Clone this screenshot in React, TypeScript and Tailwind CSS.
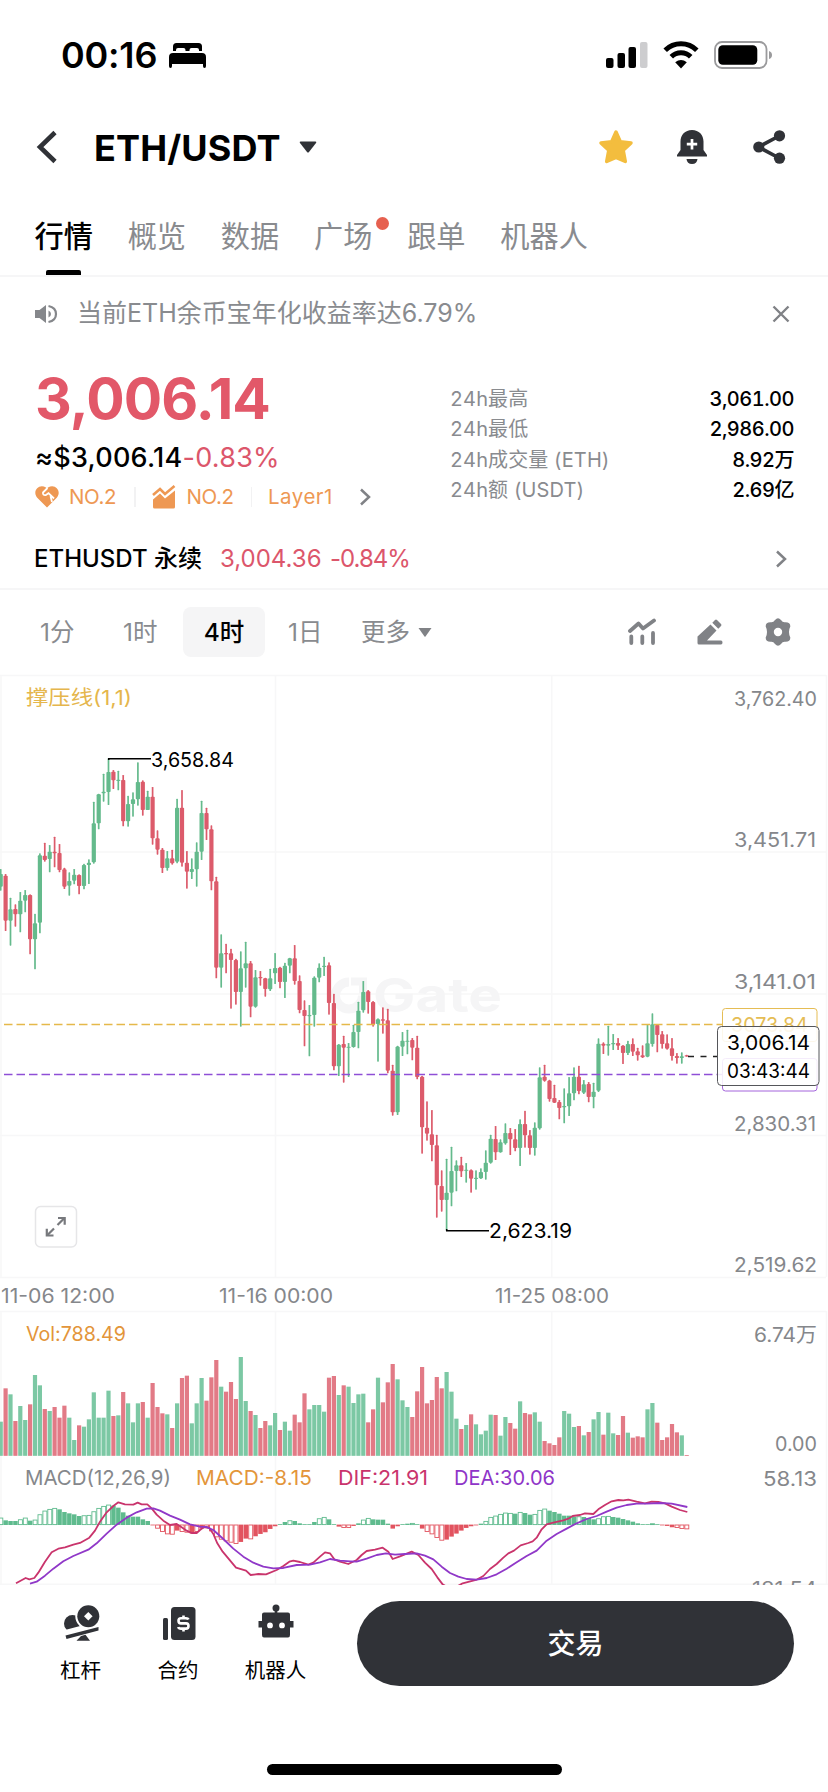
import React from "react";

type Candle = [number, number, number, number];

// Vertical positions: high, body top, body bottom, low. Each block has its own origin.
const SERIES: { base: number; rows: Candle[] }[] = [
  {
    base: 670,
    rows: [
      [597, 612, 650, 662], [612, 617, 752, 783], [683, 718, 752, 827], [703, 717, 733, 770], [666, 692, 733, 787],
      [660, 675, 692, 727], [673, 675, 808, 853], [731, 760, 808, 898], [550, 556, 758, 790], [518, 557, 570, 575],
      [525, 545, 567, 607], [500, 545, 550, 592], [522, 549, 600, 607], [593, 598, 650, 657], [607, 633, 647, 677],
      [597, 614, 632, 643], [613, 615, 648, 673], [581, 585, 648, 658], [568, 578, 585, 642], [395, 460, 577, 581],
      [371, 373, 460, 478], [311, 365, 370, 395], [265, 306, 366, 405], [300, 305, 331, 357], [302, 329, 333, 361],
      [315, 330, 454, 469], [377, 402, 454, 470], [367, 388, 402, 440], [277, 336, 388, 407], [331, 335, 420, 437],
      [362, 380, 420, 420], [351, 380, 505, 524], [481, 505, 539, 554], [534, 539, 594, 609], [543, 565, 594, 602],
      [539, 565, 580, 584], [386, 413, 575, 580], [360, 413, 578, 590], [543, 578, 605, 656], [565, 597, 606, 627],
      [517, 545, 598, 650], [392, 429, 545, 570], [413, 429, 478, 510], [466, 478, 634, 661], [620, 634, 893, 925],
      [793, 850, 893, 953], [821, 849, 853, 910], [836, 850, 870, 1016], [866, 870, 966, 1004],
    ],
  },
  {
    base: 820,
    rows: [
      [394, 445, 516, 620], [365, 430, 445, 503], [423, 430, 560, 592], [450, 472, 560, 563], [453, 471, 474, 497],
      [473, 475, 507, 530], [446, 475, 508, 513], [399, 444, 460, 492], [440, 443, 486, 505], [428, 437, 486, 534],
      [413, 415, 437, 460], [375, 415, 483, 494], [466, 483, 570, 580], [541, 570, 588, 679], [555, 585, 588, 709],
      [469, 473, 585, 620], [430, 443, 473, 487], [410, 437, 441, 468], [427, 436, 549, 584], [521, 549, 739, 751],
      [672, 674, 739, 768], [647, 672, 683, 788], [669, 680, 683, 771], [614, 636, 681, 683], [545, 572, 636, 685],
      [483, 516, 571, 578], [510, 514, 546, 581], [543, 546, 614, 620], [595, 598, 612, 725], [562, 598, 602, 641],
      [566, 601, 752, 760], [734, 752, 877, 887], [677, 680, 877, 885], [636, 662, 680, 708], [629, 662, 665, 703],
      [654, 660, 683, 721], [647, 683, 771, 778], [767, 770, 922, 1001],
    ],
  },
  {
    base: 980,
    rows: [
      [364, 443, 461, 482], [390, 463, 495, 544], [464, 496, 616, 713], [571, 618, 660, 695], [536, 638, 660, 752],
      [500, 573, 638, 679], [541, 556, 573, 634], [530, 556, 574, 591], [549, 569, 572, 608], [568, 571, 596, 638],
      [571, 593, 597, 629], [565, 576, 595, 597], [511, 548, 576, 599], [464, 476, 548, 551], [438, 477, 517, 540],
      [478, 487, 517, 518], [430, 459, 490, 494], [444, 459, 478, 525], [447, 478, 504, 514], [418, 432, 504, 558],
      [392, 432, 466, 503], [450, 466, 504, 524], [427, 443, 504, 527], [262, 292, 445, 449], [254, 290, 302, 305],
      [299, 302, 357, 365], [314, 354, 368, 369], [360, 366, 384, 418], [325, 378, 382, 430], [291, 340, 379, 408],
      [262, 290, 340, 361], [257, 290, 333, 343], [300, 313, 338, 342], [306, 312, 351, 367], [308, 335, 351, 385],
      [175, 191, 332, 336], [187, 191, 197, 222], [137, 192, 197, 227], [162, 189, 193, 210], [174, 189, 197, 210],
      [195, 197, 219, 252], [182, 192, 219, 225], [175, 192, 215, 228], [203, 214, 226, 242], [196, 226, 232, 234],
      [133, 190, 230, 232], [100, 133, 192, 200], [133, 135, 165, 217], [153, 163, 192, 206], [163, 190, 206, 209],
      [174, 205, 228, 242], [219, 228, 234, 251], [217, 229, 234, 251], [224, 226, 229, 230],
    ],
  },
];

// Ten periods per group: r = falling, g = rising.
const VOLUME_COLORS = [
  "grgrggrggr", "grrrggrggg", "gggrgrgggr", "grrrgrgrrg", "ggrrrgrrrg", "grgrrggrgg", "rrrggggrrg",
  "rggggrrgrr", "rgggrrrrrr", "rgggrgrggg", "grggrrgrrg", "grrrrgggrg", "rggrggrrgr", "rrggrrrrrgr",
].join("");

const candleColor = (i: number) => {
  if (i === 91) return "g";
  if (i === 121) return "g";
  return VOLUME_COLORS[i];
};

const VOLUME = [
  485, 385, 403, 483, 438, 480, 433, 345, 376, 447, 453, 441, 473, 437, 473, 540, 496, 500, 478, 397, 473, 473, 392,
  468, 466, 396, 430, 487, 430, 426, 473, 369, 441, 460, 463, 504, 430, 354, 347, 490, 430, 354, 422, 352, 300, 380,
  395, 366, 417, 291, 423, 453, 465, 504, 483, 496, 459, 510, 485, 512, 464, 487, 400, 448, 435, 435, 455, 353, 348,
  405, 376, 380, 429, 403, 401, 487, 448, 353, 427, 367, 312, 358, 421, 441, 471, 394, 321, 430, 420, 351, 385, 336,
  395, 476, 507, 495, 463, 493, 523, 512, 464, 465, 527, 471, 489, 506, 424, 459, 463, 457, 485, 543, 550, 555, 532,
  453, 461, 501, 498, 526, 516, 478, 456, 524, 458, 520, 525, 468, 518, 533, 529, 532, 448, 429, 488, 540, 532, 492,
  517, 526, 585,
];

// Histogram heights; an "h" suffix marks a hollow bar.
const HIST =
  "22h 14 12 12 17h 22h 13 16h 32h 43h 48h 51h 47 39 35 32 27 29h 30h 41h 51h 57h 61h 58 52 38 28 25 25 17 12 0 -12h -22h -29h -30h -18 -22h -24h -27 -22h -12 -8h -20h -38h -45h -50h -54h -58h -52 -42 -44h -35 -28 -23 -13 -5 0 9 14h 12 5 1 0 9 20h 24h 17 0 -6 -10h -10h -4 5 16h 21h 17 16 16 4 -12 -5 0 4 6h 1 -12 -22h -29h -40h -48h -45 -36 -27 -18 -10 -5 0 4 12h 24h 28h 33h 37h 36h 34 39h 36 31 33h 45h 49h 43 39 34 28 28 25 26h 24 21 17 20h 26h 27h 24 22 18 14 10 5 1 1 5h 2 0 -4 -8 -10h -13h -14h".split(
    " ",
  );

const DIF =
  "48,970 77,954 88,958 103,954 115,938 135,905 155,877 175,866 195,862 220,854 240,849 268,833 285,812 300,785 320,757 340,738 355,727 375,733 400,734 413,728 425,733 442,733 455,745 470,764 490,782 510,795 530,792 545,802 560,812 575,819 590,819 600,810 612,801 628,804 640,822 652,850 668,875 683,893 708,923 738,932 752,945 775,942 798,943 830,930 850,918 868,905 880,902 900,906 925,914 940,908 960,890 975,877 990,880 1003,898 1020,905 1045,912 1070,900 1085,885 1100,873 1125,869 1148,863 1165,875 1178,897 1200,889 1235,875 1255,885 1275,908 1295,927 1312,952 1328,973 1350,986 1370,980 1388,970 1428,960 1450,948 1470,927 1490,912 1510,893 1525,880 1542,872 1562,856 1585,849 1598,844 1610,833 1625,808 1640,793 1660,788 1690,781 1705,776 1718,768 1740,765 1755,760 1780,762 1795,748 1815,735 1835,724 1855,720 1870,721 1885,719 1910,725 1935,730 1955,725 1975,726 1995,730 2015,740 2040,750 2062,756";
const DEA =
  "90,971 110,965 135,947 160,926 190,904 220,888 265,869 290,850 320,821 350,794 380,773 410,757 440,746 460,745 480,752 510,767 540,779 570,793 600,800 620,801 640,810 670,837 700,866 730,890 760,908 790,920 820,925 850,924 890,915 930,914 960,907 990,897 1020,902 1050,904 1070,905 1100,896 1130,885 1158,880 1185,884 1215,882 1250,880 1275,887 1300,898 1325,920 1350,939 1375,950 1400,957 1430,959 1460,954 1490,943 1520,926 1550,907 1580,888 1610,872 1640,842 1670,822 1700,806 1730,790 1760,777 1790,768 1820,755 1850,743 1880,735 1910,731 1940,731 1980,729 2015,731 2062,741";

const xAt = (i: number) => 0.7 + 4.9 * i;

function Candles() {
  const rows = SERIES.flatMap((s) => s.rows.map((r) => r.map((v) => s.base + v / 3)));
  return (
    <g>
      {rows.map(([hi, top, bottom, lo], i) => (
        <g key={i} fill={candleColor(i) === "g" ? "#64ba8c" : "#dc5b6b"}>
          <rect x={xAt(i) - 0.85} y={hi} width={1.7} height={lo - hi} rx={0.6} />
          <rect x={xAt(i) - 2.1} y={top} width={4.2} height={Math.max(1.2, bottom - top)} rx={0.8} />
        </g>
      ))}
    </g>
  );
}

function Volume() {
  return (
    <g>
      {VOLUME.map((v, i) => (
        <rect
          key={i}
          x={xAt(i) - 2.1}
          y={1260 + v / 3}
          width={4.2}
          height={(587.5 - v) / 3}
          fill={VOLUME_COLORS[i] === "g" ? "#7cc8a4" : "#e27a86"}
        />
      ))}
    </g>
  );
}

function Macd() {
  return (
    <g>
      {HIST.map((t, i) => {
        const v = parseInt(t, 10);
        const hollow = t.endsWith("h");
        const h = Math.max(0.8, Math.abs(v) / 3);
        const up = v > 0 || (v === 0 && i < 135 && i !== 31 && i !== 97);
        const c = up ? "#5fbb8e" : "#e2535f";
        const y = up ? 1525 - h : 1524.6;
        return hollow ? (
          <rect key={i} x={xAt(i) - 1.9} y={y + 0.4} width={4} height={Math.max(0.5, h - 0.8)} fill="#fff" stroke={c} strokeWidth={0.9} />
        ) : (
          <rect key={i} x={xAt(i) - 2.2} y={y} width={4.5} height={h} fill={c} />
        );
      })}
      <g transform="translate(0 1260) scale(0.33333)" fill="none" strokeWidth={5.4} strokeLinejoin="round">
        <polyline points={DIF} stroke="#c9346c" />
        <polyline points={DEA} stroke="#9038c8" />
      </g>
    </g>
  );
}

function Label({ x, y, w, size = 20, fill = "#85878b", children }: { x: number; y: number; w: number; size?: number; fill?: string; children: string }) {
  return (
    <text x={x} y={y} fontSize={size} fill={fill} textLength={w} lengthAdjust="spacingAndGlyphs">
      {children}
    </text>
  );
}

function Chart() {
  return (
    <svg className="block shrink-0" width="828" height="911" viewBox="0 674 828 911">
      <g stroke="#f7f7f8" strokeWidth="1.5">
        <path d="M0 675.5H826M0 852H826M0 994H826M0 1135.5H826M0 1277.5H826M0 1311.5H826M0 1584.2H828" />
        <path d="M1 675V1277M1 1311V1584M275.5 675V1277M275.5 1311V1584M551.8 675V1277M551.8 1311V1584M826.5 675V1277M826.5 1311V1584" />
      </g>
      <g fill="#f5f5f6">
        <path d="M349 977.500a18 18 0 1 0 18 18h-9a9 9 0 1 1-9-9zM351 977.500h16v16h-8v-8h-8z" />
        <text x="373" y="1012" fontSize="47" fontWeight="700" textLength="129" lengthAdjust="spacingAndGlyphs">
          Gate
        </text>
      </g>
      <Candles />
      <Volume />
      <Macd />
      <g strokeWidth="1.300" fill="none">
        <path d="M0 1024.500H722" stroke="#e5b94a" strokeDasharray="8.5 4" strokeDashoffset="8.5" />
        <path d="M0 1074.500H722" stroke="#8f4fd6" strokeDasharray="8.5 4" strokeDashoffset="8.5" />
        <path d="M688 1056.500H717" stroke="#222" strokeDasharray="6 6.500" />
        <path d="M108.700 760V758.800H151M446.700 1229V1230.800H489" stroke="#000" strokeWidth="1.500" />
      </g>
      <Label x={151} y={766.500} w={83} fill="#000">3,658.84</Label>
      <Label x={489} y={1238} w={83} fill="#000">2,623.19</Label>
      <Label x={26} y={705} w={106} fill="#e5b64c">撑压线(1,1)</Label>
      <Label x={734} y={705.500} w={83}>3,762.40</Label>
      <Label x={734} y={847} w={82}>3,451.71</Label>
      <Label x={734} y={988.500} w={82}>3,141.01</Label>
      <Label x={734} y={1130.500} w={82}>2,830.31</Label>
      <Label x={734} y={1272} w={83}>2,519.62</Label>
      <Label x={1} y={1302.500} w={114}>11-06 12:00</Label>
      <Label x={219} y={1302.500} w={114}>11-16 00:00</Label>
      <Label x={495} y={1302.500} w={114}>11-25 08:00</Label>
      <Label x={26} y={1341} w={100} fill="#e3953a">Vol:788.49</Label>
      <Label x={754} y={1342} w={63}>6.74万</Label>
      <Label x={775} y={1451} w={42}>0.00</Label>
      <Label x={25} y={1485} w={146}>MACD(12,26,9)</Label>
      <Label x={196} y={1485} w={116} fill="#e3953a">MACD:-8.15</Label>
      <Label x={338} y={1485} w={90} fill="#c9346c">DIF:21.91</Label>
      <Label x={454} y={1485} w={101} fill="#8f35c8">DEA:30.06</Label>
      <Label x={763} y={1486} w={54}>58.13</Label>
      <Label x={752} y={1595.500} w={65}>181.54</Label>

      <rect x="722.500" y="1008.500" width="94.500" height="33" rx="3" fill="#fff" stroke="#e5bd55" />
      <Label x={731} y={1032} w={77} fill="#e5bd55">3073.84</Label>
      <rect x="722.500" y="1058.500" width="94.500" height="32.500" rx="3" fill="#fff" stroke="#a465dc" />
      <rect x="717.500" y="1026.500" width="101.500" height="59" rx="4" fill="#fff" fillOpacity="0.88" stroke="#55565a" />
      <Label x={727} y={1050} w={83} fill="#000">3,006.14</Label>
      <Label x={727} y={1078} w={83} fill="#000">03:43:44</Label>

      <rect x="35.500" y="1206.500" width="41" height="40.500" rx="5" fill="#fff" stroke="#e6e6e8" strokeWidth="1.500" />
      <g stroke="#77797d" strokeWidth="2.200" fill="none">
        <path d="M57.500 1225L64 1218.500M54 1228.500L47.500 1235" />
        <path d="M58 1218H64.700V1224.700M53.500 1235.500H46.800V1228.800" />
      </g>
    </svg>
  );
}

function StatusBar() {
  return (
    <div className="flex h-[110px] shrink-0 items-center pl-[61px] pr-[54px]">
      <span className="w-[98px] whitespace-nowrap text-[36px] font-semibold tracking-[-0.2px] text-black">00:16</span>
      <svg className="ml-[10px]" width="37" height="27" viewBox="0 0 37 27">
        <path d="M4 9V4.500Q4 1 7.500 1H29.500Q33 1 33 4.500V9H30V8Q30 6 28 6H22.500Q20.500 6 20.500 8V9H16.500V8Q16.500 6 14.500 6H9Q7 6 7 8V9Z" />
        <path d="M0 24V15Q0 11 4 11H33Q37 11 37 15V24Q37 26 35.500 26Q34 26 34 24V22H3V24Q3 26 1.500 26Q0 26 0 24Z" />
      </svg>
      <div className="ml-auto flex items-center">
        <svg width="42" height="28" viewBox="0 0 42 28">
          <rect x="0" y="17" width="7.500" height="10" rx="2" />
          <rect x="11.500" y="12" width="7.500" height="15" rx="2" />
          <rect x="22.500" y="6" width="7.500" height="21" rx="2" />
          <rect x="34" y="1" width="7.500" height="26" rx="2" fill="#cdcdcf" />
        </svg>
        <svg className="ml-[15px]" width="36" height="28" viewBox="0 0 36 28">
          <g fill="none" stroke="#000" strokeWidth="5">
            <path d="M2.200 9.300A22.500 22.500 0 0 1 33.800 9.300" />
            <path d="M8.300 15.800A13.800 13.800 0 0 1 27.700 15.800" />
          </g>
          <path d="M18 27.500L12.200 21.300Q18 16.500 23.800 21.300Z" />
        </svg>
        <svg className="ml-[15px]" width="60" height="28" viewBox="0 0 60 28">
          <rect x="1" y="1" width="51.500" height="26" rx="7" fill="none" stroke="#9a9a9c" strokeWidth="1.800" />
          <rect x="4.300" y="4.300" width="39" height="19.400" rx="4.500" />
          <path d="M55 10Q58 11 58 14T55 18Z" fill="#9a9a9c" />
        </svg>
      </div>
    </div>
  );
}

function Header() {
  return (
    <div className="flex h-[74px] shrink-0 items-center pl-[36px] pr-[42px]">
      <svg width="22" height="34" viewBox="0 0 22 34">
        <path d="M19 2.500L4 17L19 31.500" fill="none" stroke="#303237" strokeWidth="4.600" />
      </svg>
      <h1 className="ml-[36px] mt-[2px] w-[188px] whitespace-nowrap text-[36px] font-bold tracking-[0.15px] text-black">ETH/USDT</h1>
      <svg className="ml-[17px]" width="18" height="12" viewBox="0 0 18 12">
        <path d="M1.500 0.500H16.500Q18 0.500 17 2L10 11Q9 12 8 11L1 2Q0 0.500 1.500 0.500Z" fill="#303237" />
      </svg>
      <div className="ml-auto flex items-center">
        <svg width="36" height="36" viewBox="0 0 36 36">
          <path
            d="M18 3L22.300 12.700L33 13.900L25.200 21.300L27.300 32.500L18 28.500L8.700 32.500L10.800 21.300L3 13.900L13.700 12.700Z"
            fill="#f3bd3e" stroke="#f3bd3e" strokeWidth="3.500" strokeLinejoin="round"
          />
        </svg>
        <svg className="ml-[43px]" width="30" height="34" viewBox="0 0 30 34">
          <path d="M15 0C22 0 26.500 5 26.500 11.500V20L30 25V26.500H0V25L3.500 20V11.500C3.500 5 8 0 15 0Z" fill="#303237" />
          <path d="M9.500 29H20.500Q20 34 15 34T9.500 29Z" fill="#303237" />
          <path d="M15 9V19.500M9.800 14.200H20.200" stroke="#fff" strokeWidth="2.700" />
        </svg>
        <svg className="ml-[46px]" width="33" height="34" viewBox="0 0 33 34">
          <path d="M27 5.500L5.500 17L27 28.500" fill="none" stroke="#303237" strokeWidth="3.600" />
          <g fill="#303237">
            <circle cx="26.500" cy="5.800" r="5.600" />
            <circle cx="5.800" cy="17" r="5.600" />
            <circle cx="26.500" cy="28.200" r="5.600" />
          </g>
        </svg>
      </div>
    </div>
  );
}

function Tabs() {
  return (
    <nav className="flex h-[93px] shrink-0 gap-[34.800px] border-b-2 border-[#f6f6f7] pl-[34.500px] text-[29.200px] leading-[42px] text-[#898b8f]">
      <div className="flex flex-col items-center pt-[32px] font-medium text-black">
        行情
        <span className="mt-[12px] h-[5px] w-[35px] rounded-t-[2px] bg-black" />
      </div>
      <span className="pt-[32px]">概览</span>
      <span className="pt-[32px]">数据</span>
      <span className="relative pt-[32px]">
        广场
        <i className="absolute -right-[17px] top-[33px] size-[13px] rounded-full bg-[#e6604f]" />
      </span>
      <span className="pt-[32px]">跟单</span>
      <span className="pt-[32px]">机器人</span>
    </nav>
  );
}

function Notice() {
  return (
    <div className="flex h-[73px] shrink-0 items-center pl-[35px] pr-[38px] text-[#898b8f]">
      <svg width="23" height="20" viewBox="0 0 23 20">
        <path d="M0 6H4.500L11 1V19L4.500 14H0Z" fill="#85878b" />
        <path d="M13.500 6.500Q16 7.500 16 10T13.500 13.500Z" fill="#85878b" />
        <path d="M13.500 2Q21 3.500 21 10T13.500 18" fill="none" stroke="#85878b" strokeWidth="2.200" />
      </svg>
      <span className="ml-[19px] text-[25px]">当前ETH余币宝年化收益率达6.79%</span>
      <svg className="ml-auto" width="18" height="18" viewBox="0 0 18 18">
        <path d="M1.500 1.500L16.500 16.500M16.500 1.500L1.500 16.500" stroke="#808286" strokeWidth="2.400" />
      </svg>
    </div>
  );
}

function Chevron({ className }: { className?: string }) {
  return (
    <svg className={className} width="12" height="18" viewBox="0 0 12 18">
      <path d="M2 1.500L10 9L2 16.500" fill="none" stroke="#808286" strokeWidth="2.500" />
    </svg>
  );
}

const STATS = [
  ["24h最高", "3,061.00"],
  ["24h最低", "2,986.00"],
  ["24h成交量 (ETH)", "8.92万"],
  ["24h额 (USDT)", "2.69亿"],
];

function Summary() {
  return (
    <div className="flex h-[180px] shrink-0 pl-[35px] pr-[34px]">
      <div className="flex w-[415px] flex-col whitespace-nowrap">
        <div className="mt-[19px] h-[60px] text-[57px] font-bold leading-[60px] tracking-[-0.900px] text-[#e25869]">3,006.14</div>
        <div className="mt-[12px] h-[34px] text-[27px] font-medium leading-[34px] tracking-[0.250px] text-black">
          ≈$3,006.14<span className="font-normal text-[#dc566b]">-0.83%</span>
        </div>
        <div className="mt-[9px] flex h-[26px] items-center text-[20.500px] text-[#ee9853]">
          <svg width="24" height="22" viewBox="0 0 24 22">
            <path d="M12 21.500L2 11.500C-3 5 4-3 11 1.500L12 2.500L13 1.500C20-3 27 5 22 11.500Z" fill="#ee9853" />
            <path d="M12.500 2L8 6.500Q7.500 9.500 11 9L13.500 7.200L19 12.500M15.500 10L17 16" fill="none" stroke="#fff" strokeWidth="1.800" />
          </svg>
          <span className="ml-[10px] w-[48px] tracking-[-0.400px]">NO.2</span>
          <i className="ml-[17px] h-[20px] w-[1.500px] bg-[#f2f2f3]" />
          <svg className="ml-[16px]" width="24" height="24" viewBox="0 0 24 24">
            <path d="M1 10L8 4L13 9L22.500 1" fill="none" stroke="#ee9853" strokeWidth="2.600" />
            <path d="M1 14.500L8 8.500L13 13.500L23 5.500V22Q23 23.500 21.500 23.500H2.500Q1 23.500 1 22Z" fill="#ee9853" />
          </svg>
          <span className="ml-[11px] w-[48px] tracking-[-0.400px]">NO.2</span>
          <i className="ml-[16px] h-[20px] w-[1.500px] bg-[#f2f2f3]" />
          <span className="ml-[16px] w-[67px] tracking-[0.500px]">Layer1</span>
          <Chevron className="ml-[24px]" />
        </div>
      </div>
      <div className="flex flex-1 flex-col pt-[34px] text-[20px] tabular-nums">
        {STATS.map(([k, v]) => (
          <div key={k} className="flex h-[30.300px] items-center justify-between">
            <span className="tracking-[0.100px] text-[#898b8f]">{k}</span>
            <span className="font-medium tracking-[-0.500px] text-black">{v}</span>
          </div>
        ))}
      </div>
    </div>
  );
}

function Perpetual() {
  return (
    <div className="flex h-[60px] shrink-0 items-center border-b-2 border-[#f6f6f7] pb-[0px] pl-[34px] pr-[41px] text-[24px]">
      <span className="w-[170px] whitespace-nowrap font-medium text-black">ETHUSDT 永续</span>
      <span className="ml-[16px] w-[110px] text-[#dc566b]">3,004.36</span>
      <span className="tracking-[-1px] text-[#dc566b]">-0.84%</span>
      <Chevron className="ml-auto" />
    </div>
  );
}

function Intervals() {
  return (
    <div className="flex h-[84px] shrink-0 items-center pl-[40px] pr-[36px] text-[24.500px] text-[#898b8f]">
      <span className="w-[83px]">1分</span>
      <span className="w-[60px]">1时</span>
      <span className="flex h-[50px] w-[82px] items-center justify-center rounded-[8px] bg-[#f5f5f6] font-medium text-black">4时</span>
      <span className="ml-[23px] w-[73px]">1日</span>
      <span>更多</span>
      <svg className="ml-[8px]" width="14" height="9" viewBox="0 0 14 9">
        <path d="M0.500 0H13.500L7.500 8.500Q7 9 6.500 8.500Z" fill="#808286" />
      </svg>
      <div className="ml-auto flex items-center">
        <svg width="28" height="28" viewBox="0 0 28 28">
          <path d="M2 13L10.500 5.500L15 10.500L26 2.500" fill="none" stroke="#808286" strokeWidth="3.800" strokeLinecap="round" strokeLinejoin="round" />
          <path d="M3.300 18.500V25M14.300 18.500V25M25 15V25" stroke="#808286" strokeWidth="3.800" strokeLinecap="round" />
        </svg>
        <svg className="ml-[40px]" width="28" height="28" viewBox="0 0 28 28">
          <path d="M1.500 23V18.500L14.500 6.500L20.500 12.500L11 22.500H25Q26.500 22.500 26.500 24.500T25 26.500H3Q1.500 26.500 1.500 25Z" fill="#808286" />
          <path d="M16.300 4.800L19 2Q20 1 21 2L25 6Q26 7 25 8L22.300 10.800Z" fill="#808286" />
        </svg>
        <svg className="ml-[40px]" width="28" height="28" viewBox="0 0 28 28">
          <path
            d="M11 2Q14-1.500 17 2Q18.500 4.500 21 4.300Q26.500 4 26.300 8.500Q25 11 25 14T26.300 19.500Q26.500 24 21 23.700Q18.500 23.500 17 26Q14 29.500 11 26Q9.500 23.500 7 23.700Q1.500 24 1.700 19.500Q3 17 3 14T1.700 8.500Q1.500 4 7 4.300Q9.500 4.500 11 2ZM14 9.800A4.200 4.200 0 1 0 14 18.200A4.200 4.200 0 1 0 14 9.800Z"
            fill="#808286" fillRule="evenodd"
          />
        </svg>
      </div>
    </div>
  );
}

function BottomBar() {
  return (
    <div className="flex h-[106px] shrink-0 pl-[32px] pr-[34px] pt-[16px] text-[20.500px] leading-[30px] text-black">
      <div className="flex w-[97px] flex-col items-center">
        <svg width="40" height="42" viewBox="0 0 40 42" fill="#303237">
          <circle cx="11.500" cy="22.500" r="8.500" />
          <circle cx="27.300" cy="15.300" r="13" fill="#fff" />
          <path d="M4 33.500L38 25V20L4 29Z" fill="#fff" />
          <circle cx="27.300" cy="15.300" r="11" />
          <path d="M27.300 11L31.600 15.300L27.300 19.600L23 15.300Z" fill="#fff" />
          <path d="M4.500 34.500L37.500 26V29.500L5.500 38Z" />
          <path d="M20 35L24.500 33.800L29 39.700H15.500Z" />
        </svg>
        <span className="mt-[13px]">杠杆</span>
      </div>
      <div className="flex w-[98px] flex-col items-center">
        <svg width="40" height="42" viewBox="0 0 40 42" fill="#303237">
          <rect x="5" y="17" width="5" height="22" rx="1.500" />
          <rect x="13" y="6" width="24.500" height="33" rx="3.500" />
          <path
            d="M30.500 18.500Q30 17.200 28 17.200H23Q20.500 17.200 20.500 19.800T23 22.400H28Q30.500 22.400 30.500 25T28 27.600H23Q20.700 27.600 20.300 26M25.500 14.500V17.500M25.500 27.500V30.500"
            fill="none" stroke="#fff" strokeWidth="2.600"
          />
        </svg>
        <span className="mt-[13px]">合约</span>
      </div>
      <div className="flex w-[97px] flex-col items-center">
        <svg width="40" height="42" viewBox="0 0 40 42" fill="#303237">
          <circle cx="20" cy="7" r="3.500" />
          <path d="M18.700 8H21.300V13H18.700Z" />
          <path
            fillRule="evenodd"
            d="M8 11.500H32Q34 11.500 34 13.500V20H37.500V26.500H34V34Q34 36.500 32 36.500H8Q6 36.500 6 34V26.500H2.500V20H6V13.500Q6 11.500 8 11.500ZM14 21.500A2.900 2.900 0 1 0 14 27.300A2.900 2.900 0 1 0 14 21.500ZM26 21.500A2.900 2.900 0 1 0 26 27.300A2.900 2.900 0 1 0 26 21.500Z"
          />
        </svg>
        <span className="mt-[13px]">机器人</span>
      </div>
      <button className="ml-auto flex h-[85px] w-[437px] items-center justify-center rounded-full bg-[#303237] text-[28px] font-medium text-white">
        交易
      </button>
    </div>
  );
}

export default function App() {
  return (
    <main className="flex h-[1792px] w-[828px] flex-col overflow-hidden bg-white font-[Inter,'Noto_Sans_CJK_SC',sans-serif]">
      <StatusBar />
      <Header />
      <Tabs />
      <Notice />
      <Summary />
      <Perpetual />
      <Intervals />
      <Chart />
      <BottomBar />
      <div className="mx-auto mt-[73px] h-[11px] w-[295px] shrink-0 rounded-full bg-black" />
    </main>
  );
}
